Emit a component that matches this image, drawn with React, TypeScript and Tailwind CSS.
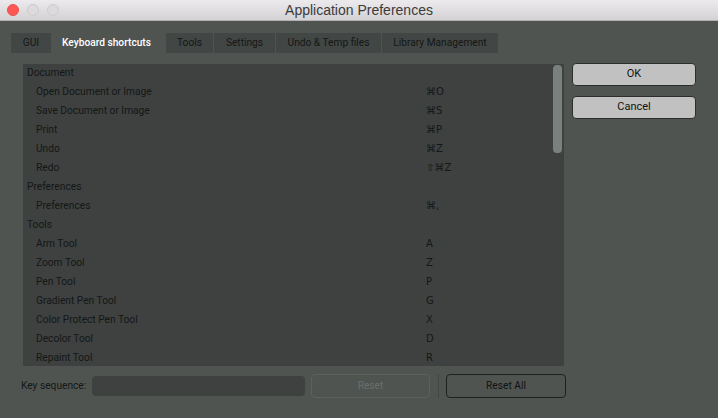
const rows: { label: string; key?: string; cat?: boolean }[] = [
  { label: "Document", cat: true },
  { label: "Open Document or Image", key: "⌘O" },
  { label: "Save Document or Image", key: "⌘S" },
  { label: "Print", key: "⌘P" },
  { label: "Undo", key: "⌘Z" },
  { label: "Redo", key: "⇧⌘Z" },
  { label: "Preferences", cat: true },
  { label: "Preferences", key: "⌘," },
  { label: "Tools", cat: true },
  { label: "Arm Tool", key: "A" },
  { label: "Zoom Tool", key: "Z" },
  { label: "Pen Tool", key: "P" },
  { label: "Gradient Pen Tool", key: "G" },
  { label: "Color Protect Pen Tool", key: "X" },
  { label: "Decolor Tool", key: "D" },
  { label: "Repaint Tool", key: "R" },
];

const tabs = [
  { name: "GUI", w: "w-[40px]" },
  { name: "Keyboard shortcuts", w: "w-[113px]", active: true },
  { name: "Tools", w: "w-[47px]" },
  { name: "Settings", w: "w-[61px]" },
  { name: "Undo & Temp files", w: "w-[105px]" },
  { name: "Library Management", w: "w-[116px]" },
];

export default function App() {
  return (
    <div className="w-[718px] h-[418px] bg-[#4f5451] flex flex-col overflow-hidden text-[10.2px] text-[#141716] font-['Roboto','Liberation_Sans',sans-serif]">
      {/* title bar */}
      <div className="h-[21px] shrink-0 flex items-center bg-gradient-to-b from-[#eceaec] to-[#d4d2d4] border-b border-[#b3b1b3] relative">
        <div className="flex gap-[8px] pl-[7px]">
          <span className="w-[12px] h-[12px] rounded-full bg-[#fc5753] border border-[#e8504b]" />
          <span className="w-[12px] h-[12px] rounded-full bg-[#dcdadc] border border-[#cdcbcd]" />
          <span className="w-[12px] h-[12px] rounded-full bg-[#dcdadc] border border-[#cdcbcd]" />
        </div>
        <div className="absolute inset-0 flex items-center justify-center text-[14px] text-[#3b3b3b] font-['Liberation_Sans',sans-serif]">
          Application Preferences
        </div>
      </div>

      {/* tabs */}
      <div className="flex pl-[11px] pt-[12px] h-[33px] shrink-0">
        {tabs.map((t) => (
          <div
            key={t.name}
            className={`${t.w} h-[20px] mr-[1px] flex items-center justify-center ${
              t.active ? "text-white font-medium pr-[4px]" : "bg-[#424644]"
            }`}
          >
            {t.name}
          </div>
        ))}
      </div>

      <div className="flex flex-1 pl-[23px] pt-[10px]">
        {/* tree */}
        <div className="w-[541px] h-[302px] bg-[#3e4140] flex">
          <div className="flex-1 pl-[4px]">
            {rows.map((r, i) => (
              <div key={i} className="h-[19px] pb-[2px] flex items-center">
                <span className={`${r.cat ? "w-[399px]" : "pl-[9px] w-[399px]"}`}>{r.label}</span>
                <span className="font-['DejaVu_Sans',sans-serif] text-[10px]">{r.key}</span>
              </div>
            ))}
          </div>
          <div className="w-[12px] pt-[1px] pr-[2px] pl-[1px]">
            <div className="h-[88px] rounded-[4px] bg-[#7a807d]" />
          </div>
        </div>

        {/* buttons */}
        <div className="flex flex-col gap-[10px] ml-[8px] -mt-[1px] text-[11px]">
          <button className="w-[124px] h-[23px] rounded-[4px] bg-[#c1c1c1] border border-[#2c2e2d] text-[#111]">OK</button>
          <button className="w-[124px] h-[23px] rounded-[4px] bg-[#c1c1c1] border border-[#2c2e2d] text-[#111]">Cancel</button>
        </div>
      </div>

      {/* bottom */}
      <div className="flex items-center h-[24px] mb-[20px] pl-[21px]">
        <span className="w-[71px]">Key sequence:</span>
        <div className="w-[213px] h-[20px] rounded-[4px] bg-[#3e4140]" />
        <button className="ml-[6px] w-[119px] h-[24px] rounded-[4px] border border-[#5c615e] text-[#6a6f6c]">Reset</button>
        <div className="ml-[8px] w-px h-[24px] bg-[#424644]" />
        <button className="ml-[7px] w-[120px] h-[24px] rounded-[4px] border border-[#1f2120] text-[#111]">Reset All</button>
      </div>
    </div>
  );
}
